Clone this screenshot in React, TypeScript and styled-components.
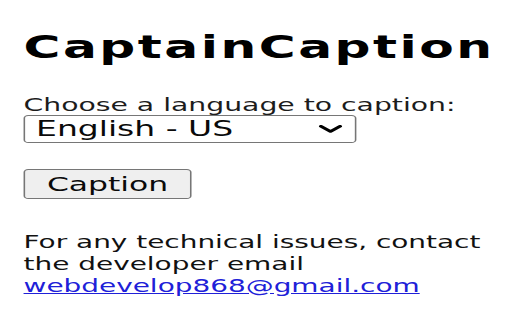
import React, { useState } from "react";
import styled, { createGlobalStyle } from "styled-components";

// the popup is shown stretched sideways, so the whole page is widened by this factor
const STRETCH = 1.57;

const GlobalStyle = createGlobalStyle`
  html, body {
    margin: 0;
    padding: 0;
    background: #ffffff;
    overflow: hidden;
  }
`;

const Page = styled.div`
  box-sizing: border-box;
  width: ${512 / STRETCH}px;
  height: 320px;
  padding: 27px 0 0 15px;
  display: flex;
  flex-direction: column;
  align-items: flex-start;
  font-family: "DejaVu Sans", Verdana, sans-serif;
  color: #111111;
  transform: scaleX(${STRETCH});
  transform-origin: 0 0;
`;

const Title = styled.h1`
  margin: 0 0 28px 0;
  font-size: 32px;
  line-height: 40px;
  font-weight: bold;
  letter-spacing: 1.6px;
  color: #000000;
`;

const Label = styled.label`
  display: block;
  font-size: 18px;
  line-height: 20px;
  color: #1c1c1c;
`;

const SelectWrap = styled.div`
  position: relative;
  width: 212px;
  height: 28px;
  margin-bottom: 26px;
`;

const Select = styled.select`
  appearance: none;
  -webkit-appearance: none;
  box-sizing: border-box;
  width: 100%;
  height: 100%;
  margin: 0;
  padding: 0 0 0 7px;
  border: 1px solid #767676;
  border-radius: 3px;
  background: #ffffff;
  font-family: "DejaVu Sans", Verdana, sans-serif;
  font-size: 21px;
  color: #0a0a0a;
  outline: none;
`;

const Chevron = styled.svg`
  position: absolute;
  right: 9px;
  top: 10px;
  width: 15px;
  height: 8px;
  pointer-events: none;
`;

const Button = styled.button`
  box-sizing: border-box;
  width: 107px;
  height: 30px;
  margin: 0 0 32px 0;
  padding: 0;
  border: 1px solid #767676;
  border-radius: 3px;
  background: #efefef;
  font-family: "DejaVu Sans", Verdana, sans-serif;
  font-size: 20px;
  color: #0a0a0a;
`;

const Note = styled.p`
  margin: 0;
  max-width: 305px;
  font-size: 17.8px;
  line-height: 22px;
  color: #111111;
`;

const Mail = styled.a`
  color: #2020d8;
  text-decoration: underline;
`;

const App: React.FC = () => {
  const [language, setLanguage] = useState("en-US");

  return (
    <>
      <GlobalStyle />
      <Page>
        <Title>CaptainCaption</Title>
        <Label htmlFor="lang">Choose a language to caption:</Label>
        <SelectWrap>
          <Select id="lang" value={language} onChange={(e) => setLanguage(e.target.value)}>
            <option value="en-US">English - US</option>
            <option value="en-GB">English - UK</option>
            <option value="es-ES">Spanish</option>
            <option value="fr-FR">French</option>
          </Select>
          <Chevron viewBox="0 0 15 8">
            <path d="M1.4 1.3 L7.5 6.5 L13.6 1.3" fill="none" stroke="#000" strokeWidth="2.6" strokeLinecap="round" strokeLinejoin="round" />
          </Chevron>
        </SelectWrap>
        <Button>Caption</Button>
        <Note>
          For any technical issues, contact the developer email{" "}
          <Mail href="mailto:webdevelop868@gmail.com">webdevelop868@gmail.com</Mail>
        </Note>
      </Page>
    </>
  );
};

export default App;
